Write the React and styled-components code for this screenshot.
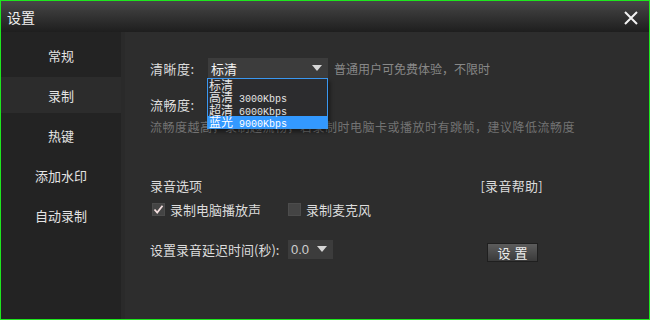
import React from "react";
import styled, { createGlobalStyle } from "styled-components";

const GlobalStyle = createGlobalStyle`
  html, body {
    margin: 0;
    padding: 0;
    background: #2d2d2d;
  }
  * {
    box-sizing: border-box;
  }
`;

const CJK = `"Noto Sans CJK SC", "Noto Sans", sans-serif`;

const Window = styled.div`
  width: 650px;
  height: 320px;
  border: 1px solid #1ee61e;
  display: flex;
  flex-direction: column;
  background: #2d2d2d;
  font-family: ${CJK};
  overflow: hidden;
`;

const TitleBar = styled.div`
  height: 31px;
  flex: none;
  display: flex;
  align-items: center;
  justify-content: space-between;
  padding: 0 10px 0 6px;
  background: linear-gradient(#474747, #1e1e1e);

  h1 {
    margin: 0;
    font-size: 14px;
    font-weight: 400;
    color: #f0f0f0;
    line-height: 1;
  }
`;

const CloseButton = styled.button`
  border: none;
  background: none;
  padding: 0;
  width: 16px;
  height: 16px;
  display: flex;
  align-items: center;
  justify-content: center;
  margin-top: 2px;
`;

const Main = styled.div`
  flex: 1;
  display: flex;
`;

const Sidebar = styled.nav`
  width: 120px;
  flex: none;
  background: #232323;
  padding-top: 5px;
  display: flex;
  flex-direction: column;
  gap: 4px;
`;

const NavItem = styled.div`
  height: 36px;
  display: flex;
  align-items: center;
  justify-content: center;
  font-size: 13px;
  color: #e4e4e4;
  background: ${(p) => (p.$active ? "#2c2c2c" : "transparent")};
`;

const Content = styled.section`
  flex: 1;
  border-left: 4px solid #2a2a2a;
  padding: 26px 0 0 25px;
  color: #dcdcdc;
  font-size: 13px;
`;

const Row = styled.div`
  display: flex;
  align-items: center;
  height: 20px;
  margin-top: ${(p) => p.$mt || 0}px;
`;

const Label = styled.span`
  width: 58px;
  flex: none;
  letter-spacing: 0.5px;
`;

const SelectWrap = styled.div`
  position: relative;
  flex: none;
`;

const SelectBox = styled.div`
  width: ${(p) => p.$w}px;
  height: ${(p) => p.$h || 20}px;
  background: #3c3c3c;
  display: flex;
  align-items: center;
  justify-content: space-between;
  padding: 0 4px 0 3px;
  color: ${(p) => (p.$mono ? "#d0d0d0" : "#f2f2f2")};
  font-family: ${(p) => (p.$mono ? `"Liberation Sans", sans-serif` : CJK)};
  font-size: 13px;
`;

const Arrow = styled.span`
  width: 0;
  height: 0;
  border-left: 5px solid transparent;
  border-right: 5px solid transparent;
  border-top: 6px solid #d6d6d6;
  margin-right: 2px;
`;

const Dropdown = styled.ul`
  position: absolute;
  top: 20px;
  left: -1px;
  width: 121px;
  margin: 0;
  padding: 0;
  list-style: none;
  border: 1px solid #3a97f0;
  background: #2c2c2e;
  box-shadow: 2px 3px 4px rgba(0, 0, 0, 0.45);
  z-index: 2;
`;

const Option = styled.li`
  height: 12.3px;
  line-height: 12.3px;
  font-size: 12px;
  padding-left: 1px;
  color: ${(p) => (p.$selected ? "#ffffff" : "#e6e6e6")};
  background: ${(p) => (p.$selected ? "#3399ff" : "transparent")};
  white-space: pre;

  small {
    font-family: "Liberation Mono", monospace;
    font-size: 10px;
  }
`;

const Hint = styled.span`
  margin-left: 6px;
  font-size: 12px;
  color: #888888;
`;

const Note = styled.p`
  margin: 6px 0 0;
  font-size: 12px;
  letter-spacing: 0.5px;
  color: #737373;
  line-height: 14px;
`;

const SoundBlock = styled.div`
  width: 393px;
  margin-top: 44px;
`;

const Header = styled.div`
  display: flex;
  justify-content: space-between;
  align-items: center;
  height: 14px;
`;

const HelpLink = styled.span`
  color: #dcdcdc;
  letter-spacing: 0.3px;
`;

const Options = styled.div`
  display: flex;
  align-items: center;
  margin-top: 9px;
  height: 16px;
`;

const CheckItem = styled.label`
  display: flex;
  align-items: center;
  gap: 5px;
  width: ${(p) => p.$w || "auto"};
  padding-left: 2px;
`;

const Box = styled.span`
  width: 13px;
  height: 13px;
  background: #444444;
  border: 1px solid #4c4c4c;
  display: flex;
  align-items: center;
  justify-content: center;
`;

const DelayRow = styled.div`
  display: flex;
  align-items: center;
  margin-top: 22px;
  height: 20px;

  > span:first-child {
    width: 138px;
  }
`;

const Button = styled.button`
  margin-left: 154px;
  margin-top: 6px;
  width: 51px;
  height: 19px;
  border: 1px solid #1f1f1f;
  background: linear-gradient(#5c5c5c, #3a3a3a);
  color: #eeeeee;
  font-family: ${CJK};
  font-size: 13px;
  padding: 0;
  line-height: 17px;
  letter-spacing: 4px;
  text-indent: 4px;
`;

const navItems = ["常规", "录制", "热键", "添加水印", "自动录制"];

const qualities = [
  ["标清", ""],
  ["高清", "3000Kbps"],
  ["超清", "6000Kbps"],
  ["蓝光", "9000Kbps"],
];

export default function App() {
  return (
    <>
      <GlobalStyle />
      <Window>
        <TitleBar>
          <h1>设置</h1>
          <CloseButton>
            <svg width="14" height="14" viewBox="0 0 14 14">
              <path d="M1 1L13 13M13 1L1 13" stroke="#f2f2f2" strokeWidth="2" />
            </svg>
          </CloseButton>
        </TitleBar>
        <Main>
          <Sidebar>
            {navItems.map((n) => (
              <NavItem key={n} $active={n === "录制"}>
                {n}
              </NavItem>
            ))}
          </Sidebar>
          <Content>
            <Row>
              <Label>清晰度:</Label>
              <SelectWrap>
                <SelectBox $w={120}>
                  标清
                  <Arrow />
                </SelectBox>
                <Dropdown>
                  {qualities.map(([name, rate], i) => (
                    <Option key={name} $selected={i === 3}>
                      {name}
                      {rate && <small> {rate}</small>}
                    </Option>
                  ))}
                </Dropdown>
              </SelectWrap>
              <Hint>普通用户可免费体验，不限时</Hint>
            </Row>
            <Row $mt={16}>
              <Label>流畅度:</Label>
              <SelectWrap>
                <SelectBox $w={120}>
                  高
                  <Arrow />
                </SelectBox>
              </SelectWrap>
            </Row>
            <Note>流畅度越高，录制越流畅，若录制时电脑卡或播放时有跳帧，建议降低流畅度</Note>
            <SoundBlock>
              <Header>
                <span>录音选项</span>
                <HelpLink>[录音帮助]</HelpLink>
              </Header>
              <Options>
                <CheckItem $w="136px">
                  <Box>
                    <svg width="11" height="11" viewBox="0 0 11 11">
                      <path d="M1.5 5.5L4.2 8.5L9.5 1.8" fill="none" stroke="#f3dede" strokeWidth="1.8" />
                    </svg>
                  </Box>
                  录制电脑播放声
                </CheckItem>
                <CheckItem>
                  <Box />
                  录制麦克风
                </CheckItem>
              </Options>
              <DelayRow>
                <span>设置录音延迟时间(秒):</span>
                <SelectBox $w={45} $h={19} $mono>
                  0.0
                  <Arrow />
                </SelectBox>
                <Button>设置</Button>
              </DelayRow>
            </SoundBlock>
          </Content>
        </Main>
      </Window>
    </>
  );
}
